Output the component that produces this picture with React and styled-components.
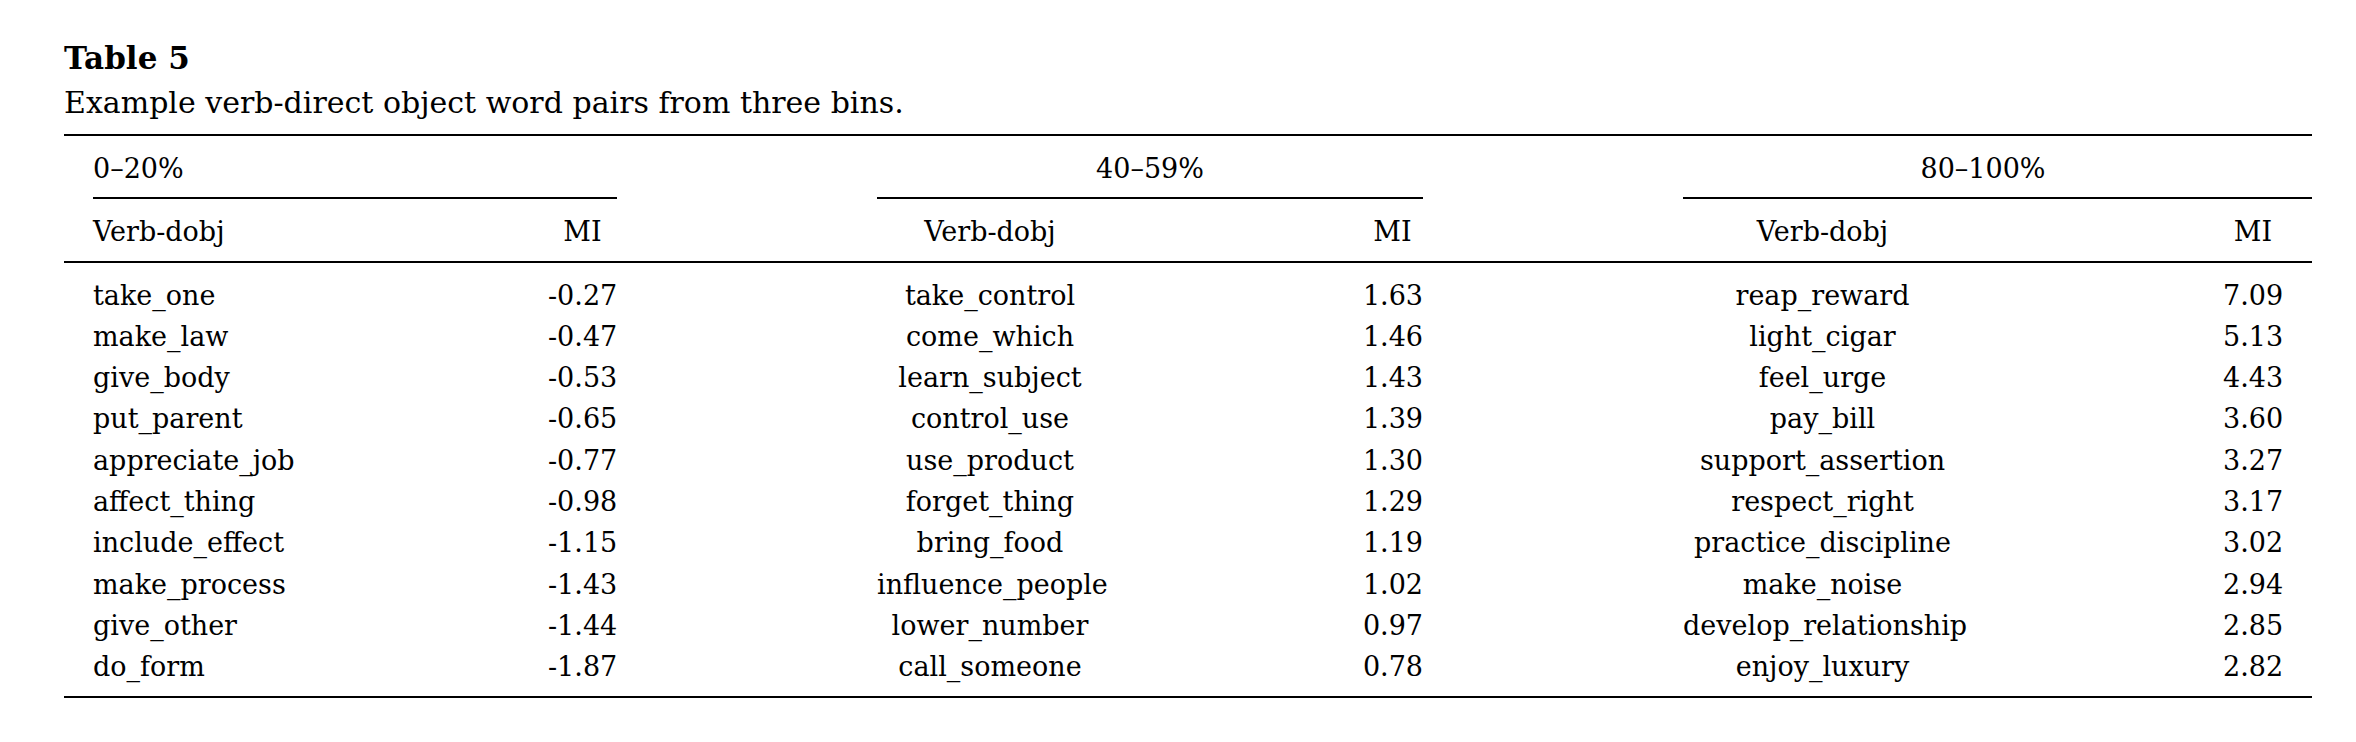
import styled, { createGlobalStyle } from 'styled-components';

const GlobalStyle = createGlobalStyle`
  html, body {
    margin: 0;
    padding: 0;
    background: #ffffff;
  }
  body {
    font-family: 'DejaVu Serif', 'Liberation Serif', serif;
    color: #000000;
  }
`;

// pad | v1 | m1 | gap | v2 | sp | m2 | gap | v3 | sp | m3 | pad
const COLS = '29px 455px 69px 260px 226px 259px 61px 260px 279px 261px 60px 29px';

const Page = styled.div`
  padding: 38px 0 0 64px;
  width: 2248px;
`;

const Title = styled.div`
  font-weight: bold;
  font-size: 31px;
  line-height: 40px;
`;

const Caption = styled.div`
  font-size: 30px;
  line-height: 40px;
  margin-top: 5px;
`;

const Table = styled.div`
  margin-top: 11px;
  border-top: 2px solid #000;
  border-bottom: 2px solid #000;
  font-size: 27px;
  line-height: 41.3px;
`;

const Row = styled.div`
  display: grid;
  grid-template-columns: ${COLS};
`;

const HeadRow = styled(Row)`
  border-bottom: 2px solid #000;
`;

const Body = styled(Row)`
  padding: 12px 0 8px;
`;

const GroupLabel = styled.div`
  grid-column: ${({ $span }) => $span};
  text-align: ${({ $align }) => $align || 'center'};
  padding: 12px ${({ $padRight }) => $padRight || 0}px 8px 0;
  border-bottom: 2px solid #000;
`;

const HeadCell = styled.div`
  grid-column: ${({ $col }) => $col};
  text-align: ${({ $align }) => $align || 'center'};
  padding: 12px 0 8px;
`;

const Cell = styled.div`
  grid-column: ${({ $col }) => $col};
  text-align: ${({ $align }) => $align || 'center'};
  white-space: nowrap;
`;

const groups = [
  {
    label: '0–20%',
    labelSpan: '2 / 4',
    align: 'left',
    verbCol: 2,
    miCol: 3,
    rows: [
      ['take_one', '-0.27'],
      ['make_law', '-0.47'],
      ['give_body', '-0.53'],
      ['put_parent', '-0.65'],
      ['appreciate_job', '-0.77'],
      ['affect_thing', '-0.98'],
      ['include_effect', '-1.15'],
      ['make_process', '-1.43'],
      ['give_other', '-1.44'],
      ['do_form', '-1.87'],
    ],
  },
  {
    label: '40–59%',
    labelSpan: '5 / 8',
    align: 'center',
    verbCol: 5,
    miCol: 7,
    rows: [
      ['take_control', '1.63'],
      ['come_which', '1.46'],
      ['learn_subject', '1.43'],
      ['control_use', '1.39'],
      ['use_product', '1.30'],
      ['forget_thing', '1.29'],
      ['bring_food', '1.19'],
      ['influence_people', '1.02'],
      ['lower_number', '0.97'],
      ['call_someone', '0.78'],
    ],
  },
  {
    label: '80–100%',
    labelSpan: '9 / 13',
    padRight: 29,
    align: 'center',
    verbCol: 9,
    miCol: 11,
    rows: [
      ['reap_reward', '7.09'],
      ['light_cigar', '5.13'],
      ['feel_urge', '4.43'],
      ['pay_bill', '3.60'],
      ['support_assertion', '3.27'],
      ['respect_right', '3.17'],
      ['practice_discipline', '3.02'],
      ['make_noise', '2.94'],
      ['develop_relationship', '2.85'],
      ['enjoy_luxury', '2.82'],
    ],
  },
];

const App = () => {
  return (
    <>
      <GlobalStyle />
      <Page>
        <Title>Table 5</Title>
        <Caption>Example verb-direct object word pairs from three bins.</Caption>
        <Table>
          <Row>
            {groups.map((g) => (
              <GroupLabel key={g.label} $span={g.labelSpan} $align={g.align} $padRight={g.padRight}>
                {g.label}
              </GroupLabel>
            ))}
          </Row>
          <HeadRow>
            {groups.map((g) => [
              <HeadCell key={g.label + 'v'} $col={g.verbCol} $align={g.align}>
                Verb-dobj
              </HeadCell>,
              <HeadCell key={g.label + 'm'} $col={g.miCol}>
                MI
              </HeadCell>,
            ])}
          </HeadRow>
          <Body>
            {groups[0].rows.map((_, i) =>
              groups.map((g) => [
                <Cell key={g.label + i + 'v'} $col={g.verbCol} $align={g.align}>
                  {g.rows[i][0]}
                </Cell>,
                <Cell key={g.label + i + 'm'} $col={g.miCol} $align="right">
                  {g.rows[i][1]}
                </Cell>,
              ])
            )}
          </Body>
        </Table>
      </Page>
    </>
  );
};

export default App;
